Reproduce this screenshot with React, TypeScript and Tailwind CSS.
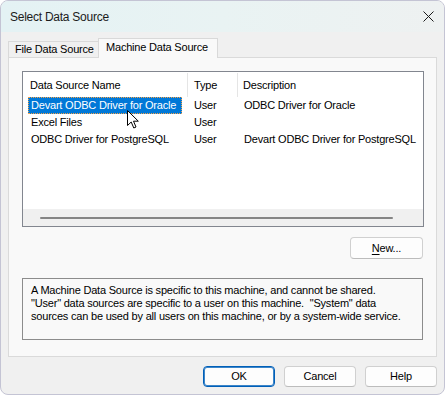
const rows = [
  { name: 'Devart ODBC Driver for Oracle', type: 'User', desc: 'ODBC Driver for Oracle', selected: true },
  { name: 'Excel Files', type: 'User', desc: '' },
  { name: 'ODBC Driver for PostgreSQL', type: 'User', desc: 'Devart ODBC Driver for PostgreSQL' },
];

function DlgButton({ children, primary }: { children: React.ReactNode; primary?: boolean }) {
  return (
    <button
      className={
        'w-[72px] h-[21px] rounded-[4px] bg-[#fdfdfd] text-[11px] text-black flex items-center justify-center ' +
        (primary
          ? 'border border-[#005fb8] shadow-[inset_0_0_0_1px_#3d86c9]'
          : 'border border-[#d0d0d0] border-b-[#bcbcbc]')
      }
    >
      {children}
    </button>
  );
}

function Cursor() {
  return (
    <svg width="13" height="20" viewBox="0 0 13 20" className="absolute left-[126px] top-[109px] z-20">
      <path
        d="M0.5 0.5 L0.5 15.5 L4.2 12 L6.8 18 L9 17 L6.5 11.2 L11.3 11.2 Z"
        fill="#fff"
        stroke="#000"
        strokeWidth="1"
        strokeLinejoin="miter"
      />
    </svg>
  );
}

export default function App() {
  return (
    <div
      className="relative w-[445px] h-[395px] bg-[#f0f0f0] border border-[#c4c4d4] rounded-[8px] overflow-hidden flex flex-col tracking-[-0.2px] text-black"
      style={{ fontFamily: '"Liberation Sans", Arial, sans-serif' }}
    >
      {/* title bar */}
      <div className="h-[31px] shrink-0 flex items-center justify-between pl-[9px] pr-[10px] bg-linear-to-r from-[#e4f2f4] via-[#e9f3f3] to-[#eef1f1]">
        <span className="text-[12px] text-[#1b1b1b] tracking-[-0.25px]">Select Data Source</span>
        <svg width="11" height="11" viewBox="0 0 11 11">
          <path d="M0.5 0.5 L10.5 10.5 M10.5 0.5 L0.5 10.5" stroke="#1b1b1b" strokeWidth="1" />
        </svg>
      </div>

      {/* tabs */}
      <div className="mt-[6px] ml-[7px] h-[19px] flex items-end text-[11px]">
        <div className="w-[90px] h-[16px] border-l border-t border-[#d9d9d9] bg-[#f0f0f0] pl-[6px] flex items-center">
          File Data Source
        </div>
        <div className="relative z-10 w-[120px] h-[20px] mb-[-1px] border-l border-t border-r border-[#d9d9d9] bg-[#f9f9f9] pl-[7px] pb-[2px] flex items-center">
          Machine Data Source
        </div>
      </div>

      {/* tab panel */}
      <div className="mx-[7px] h-[300px] border border-[#dadada] bg-[#f9f9f9] pl-[13px] pt-[13px] flex flex-col text-[11px]">
        {/* list view */}
        <div className="w-[402px] h-[156px] border border-[#82868f] bg-white flex flex-col">
          <div className="h-[25px] pt-[1px] flex items-stretch">
            <div className="w-[165px] border-r border-[#e5e5e5] pl-[7px] flex items-center">Data Source Name</div>
            <div className="w-[50px] border-r border-[#e5e5e5] pl-[6px] flex items-center">Type</div>
            <div className="pl-[5px] flex items-center">Description</div>
          </div>
          {rows.map((r) => (
            <div key={r.name} className="h-[17px] flex items-center">
              <div className="w-[165px] pl-[5px] flex items-center">
                {r.selected ? (
                  <span className="h-[17px] pl-[2px] pr-[5px] bg-[#0078d7] text-white border border-dotted border-[#f7a348] flex items-center">
                    {r.name}
                  </span>
                ) : (
                  <span className="pl-[3px]">{r.name}</span>
                )}
              </div>
              <div className="w-[50px] pl-[6px]">{r.type}</div>
              <div className="pl-[6px]">{r.desc}</div>
            </div>
          ))}
          <div className="flex-1" />
          {/* horizontal scrollbar */}
          <div className="h-[17px] bg-[#f0f0f0] flex items-center pl-[17px]">
            <div className="w-[353px] h-[2px] bg-[#858585] rounded-full" />
          </div>
        </div>

        <div className="w-[402px] mt-[10px] flex justify-end pr-[1px]">
          <button className="w-[73px] h-[22px] rounded-[4px] bg-[#fdfdfd] border border-[#d0d0d0] border-b-[#bcbcbc] text-[11px] flex items-center justify-center">
            <span>
              <span className="underline underline-offset-2">N</span>ew...
            </span>
          </button>
        </div>

        <div className="w-[401px] h-[62px] mt-[19px] border border-[#8c8c8c] pl-[8px] pt-[5px] leading-[13px] text-[11px]">
          <p>A Machine Data Source is specific to this machine, and cannot be shared.</p>
          <p>"User" data sources are specific to a user on this machine.&nbsp; "System" data</p>
          <p>sources can be used by all users on this machine, or by a system-wide service.</p>
        </div>
      </div>

      {/* bottom buttons */}
      <div className="mt-[9px] pr-[7px] flex justify-end gap-[9px]">
        <DlgButton primary>OK</DlgButton>
        <DlgButton>Cancel</DlgButton>
        <DlgButton>Help</DlgButton>
      </div>

      <Cursor />
    </div>
  );
}
